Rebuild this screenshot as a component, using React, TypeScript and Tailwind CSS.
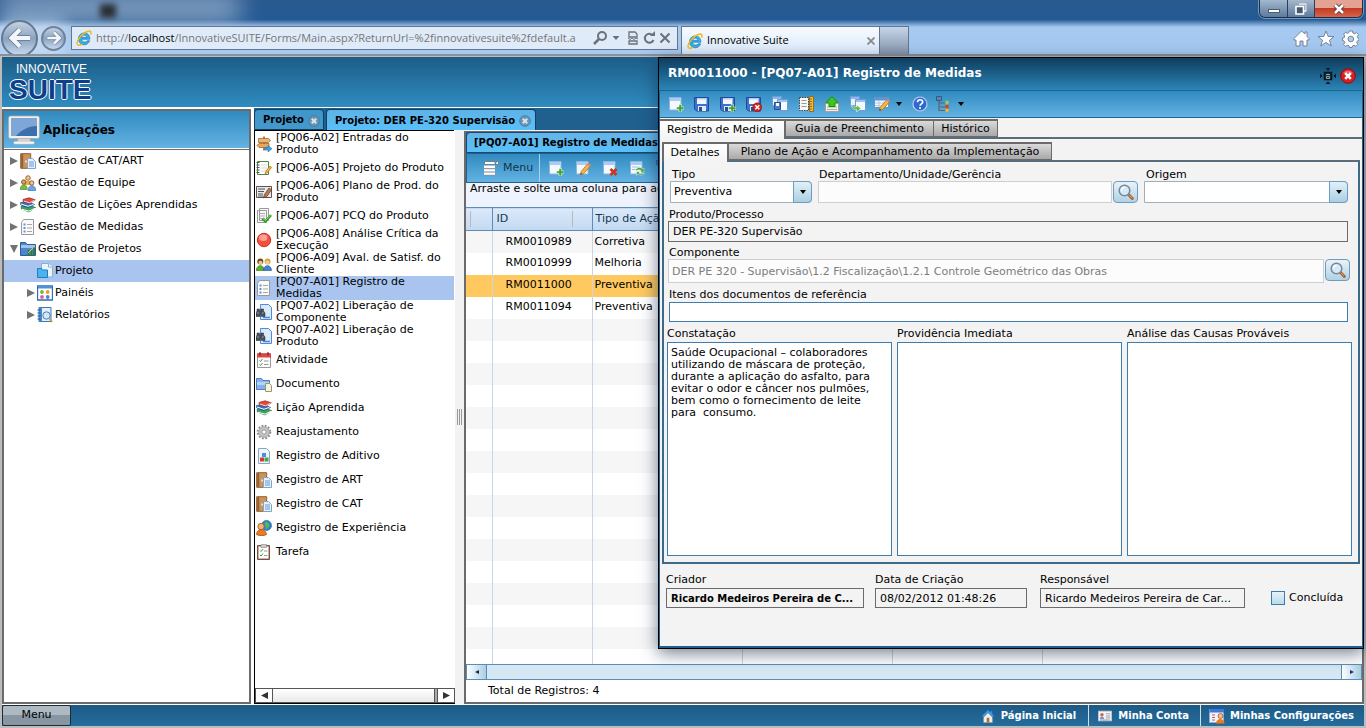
import React from 'react';

type IconProps = { name: string; className?: string };

const page = (
  <>
    <path d="M1.5 1.5h11.500v12.500h-11.500z" fill="#f4f9ff" stroke="#8fb4dd" />
    <path d="M2 2h10.500v3H2z" fill="#a9cdf2" />
  </>
);
const floppy = (
  <>
    <path d="M.5 1.5h14v13.500h-12l-2-2z" fill="#3f72cc" stroke="#1f4a9c" />
    <path d="M3 2h9.500v6H3z" fill="#f3f7fd" />
    <path d="M3 2h9.500v1.500H3z" fill="#b3cef2" />
    <path d="M4 10h8v5H4z" fill="#dfe9f7" />
    <path d="M5 11h3v4H5z" fill="#2b4f8f" />
  </>
);
const plus = <path d="M11 8.500h2.500V11H16v2.500h-2.500V16H11v-2.500H8.500V11H11z" fill="#3fa535" stroke="#fff" strokeWidth=".5" />;
const book = (
  <>
    <path d="M.7.7h10v14.600h-10z" fill="#cf9358" stroke="#93602e" />
    <path d="M1.200 1.200h2v13.600h-2z" fill="#8f5f35" />
    <path d="M5 7.500h3v2H5z" fill="#f6dcb6" />
    <path d="M7.500 5.500h5l3 3v7h-8z" fill="#e6f1fc" stroke="#7ba5d2" />
    <path d="M9 9h5M9 11h5M9 13h5" stroke="#6d98c8" />
  </>
);
const books = (
  <>
    <path d="M1 9.500 8 8l7.500 2.500L9 15 1.500 12z" fill="#3ea158" stroke="#1f6f38" strokeWidth=".7" />
    <path d="M2 12.200 9 14.200l6-3" stroke="#fff" fill="none" />
    <path d="M.6 5.500 8 4.500l6.500 3L8 10.500.8 8z" fill="#2f6fc2" stroke="#1a4789" strokeWidth=".7" />
    <path d="m1 7 7 2.300 5.500-2" stroke="#fff" fill="none" />
    <path d="M3 2.500 9 .8l6.300 2L9.500 6.500 3.300 4.500z" fill="#e5493c" stroke="#9c1f18" strokeWidth=".7" />
    <path d="m4 4.200 5.500 1.600 5-2.600" stroke="#fff" fill="none" strokeWidth=".8" />
  </>
);
const checklist = (
  <>
    <path d="m3.500.5-2 3v12h12V.5z" fill="#fafafa" stroke="#9a9a9a" />
    <path d="M3.500 4.500h2v2h-2zM3.500 8h2v2h-2zM3.500 11.500h2v2h-2z" fill="#5f93d6" />
    <path d="M7 5.500h5M7 9h5M7 12.500h5" stroke="#a7a7a7" />
  </>
);
const binocular = (
  <>
    <path d="M4.500.5h8l3 3v12h-11z" fill="#dbeafb" stroke="#4f8ad8" />
    <path d="M7 13.500h7" stroke="#4f8ad8" strokeWidth="1.500" />
    <path d="M1 5h2.500v2h1.500V5h2.500v2L9 9v3.500H5.300V10H4v2.500H0V9l1-2z" fill="#4a5058" stroke="#22262b" strokeWidth=".5" />
    <path d="M1.200 9h1.600M6 9h1.600" stroke="#a9b0b8" />
  </>
);
const search = (
  <>
    <path d="m10.500 10.500 3.800 4" stroke="#a86a32" strokeWidth="3" strokeLinecap="round" />
    <path d="m10.500 10.500 3 3" stroke="#d59a5d" strokeLinecap="round" />
    <circle cx="6.500" cy="6.500" r="5.300" fill="#d5e9fc" stroke="#7b8796" strokeWidth="1.500" />
    <path d="M3.500 6.500a3 3 0 0 1 3-3" stroke="#fff" fill="none" strokeWidth="1.300" />
  </>
);
const pencil = (
  <>
    <path d="m5.500 14.500.8-3.200L12.500 4l2.700 2.200-6.400 7.300z" fill="#f1b548" stroke="#b3731c" strokeWidth=".8" />
    <path d="m12.500 4 1-1.200 2.500 2-.9 1.400z" fill="#e08585" />
    <path d="m5.300 14.700.5-1.800 1.400 1.200z" fill="#333" />
  </>
);
const ie = (
  <>
    <path d="M13.800 9.200H5.600c.2 3.200 4.300 3.800 5.700 1.500h2.300c-.9 2.800-3 4.100-5.300 4.100-3.400 0-5.800-2.600-5.800-6s2.500-5.900 5.800-5.900c3.500 0 5.700 2.500 5.500 6.300zM5.700 7.400h5c-.2-3-4.700-3.100-5 0z" fill="#39aee6" stroke="#1778b8" strokeWidth=".7" />
    <path d="M1.600 14.700C-.8 11.600 6.200 2.700 12.200 1.200c2.600-.6 3.300.9 2.400 3.200" fill="none" stroke="#f3b81c" strokeWidth="1.500" />
    <path d="M1.600 14.700c1 1 3.300.2 4.700-.6" fill="none" stroke="#f3b81c" strokeWidth="1.300" />
  </>
);
const tree = (
  <>
    <path d="M3 4v10.500h7M3 7h6M3 11h6" stroke="#5b6672" fill="none" strokeWidth="1.200" />
    <path d="M.5.500h5v4h-5z" fill="#5d83b5" stroke="#36598a" />
    <circle cx="11" cy="6.500" r="1.900" fill="#8ed14f" />
    <circle cx="11" cy="10.700" r="2" fill="#e23a3a" />
    <circle cx="11" cy="14.300" r="1.700" fill="#eac02a" />
  </>
);
const pages = (
  <>
    <path d="M.5.500h9v9h-9z" fill="#e9f2fc" stroke="#6d9bd3" />
    <path d="M1 1h8v2H1z" fill="#8cb7ea" />
    <path d="M5.500 3.500h10v11h-10z" fill="#f6faff" stroke="#6d9bd3" />
    <path d="M6 4h9v2H6z" fill="#9cc3ee" />
  </>
);

const ICONS: Record<string, React.ReactNode> = {
  ie, book, books, checklist, binocular, search, tree,
  monitor: (
    <>
      <path d="M5 12h6l.8 2.500H4.200z" fill="#d8d8d8" stroke="#8b8b8b" strokeWidth=".3" />
      <rect x="2.800" y="13.600" width="10.400" height="1.500" rx=".6" fill="#f4f4f4" stroke="#999" strokeWidth=".2" />
      <rect x=".3" y="1" width="15.400" height="11.300" rx=".9" fill="#f1f1f1" stroke="#a8a8a8" strokeWidth=".4" />
      <rect x="1.500" y="2.200" width="13" height="8.800" fill="#3c6fad" />
      <path d="M1.500 2.200h13v3.800C10 6 6 8.500 4 11H1.500z" fill="#7ea6d6" />
    </>
  ),
  people: (
    <>
      <circle cx="8" cy="3" r="2.300" fill="#edc48f" stroke="#8a5a22" strokeWidth=".8" />
      <path d="M4.500 10c0-6 7-6 7 0z" fill="#e4b04a" />
      <circle cx="3.700" cy="7" r="2.200" fill="#d9a066" stroke="#754619" strokeWidth=".8" />
      <path d="M.3 14.500c0-6.500 7-6.500 7 0z" fill="#76bd45" stroke="#3f7e20" strokeWidth=".6" />
      <circle cx="11.700" cy="8" r="2.200" fill="#f1c594" stroke="#754619" strokeWidth=".8" />
      <path d="M8.200 15.500c0-6.500 7.500-6.500 7.500 0z" fill="#6ea4e4" stroke="#2c62ac" strokeWidth=".6" />
    </>
  ),
  projects: (
    <>
      <path d="M.5 1.500h5l1.500 2h8.500v11H.5z" fill="#4d87cb" stroke="#2c5a94" />
      <path d="M1 4h14v3H1z" fill="#9dc3ee" />
      <path d="M8.500 15V9M11.500 15V9.500M14 15V6.500" stroke="#2f7a33" strokeWidth="1.700" />
      <path d="m8 12 5-5" stroke="#f1c431" />
    </>
  ),
  folder: (
    <>
      <path d="M4.500.5h7l4 3.500v10h-11z" fill="#eaf4fd" stroke="#8aaecb" />
      <path d="M11.500.5V4h4" fill="#fff" stroke="#8aaecb" />
      <path d="M.5 5.500h4l1 1.500h5v7.500H.5z" fill="#4cb4ec" stroke="#1d7fc0" />
    </>
  ),
  panels: (
    <>
      <path d="M.5 1h15v14H.5z" fill="#fff" stroke="#2b6cb5" strokeWidth="1.300" />
      <path d="M1 1.500h14v2H1z" fill="#4a91da" />
      <circle cx="5" cy="7" r="1.900" fill="#7db338" />
      <circle cx="10.700" cy="7" r="1.900" fill="#e7a026" />
      <circle cx="5" cy="12" r="1.900" fill="#d85f9f" />
      <circle cx="10.700" cy="12" r="1.900" fill="#4d85dc" />
    </>
  ),
  reports: (
    <>
      <path d="M2 .5h12v14H2z" fill="#e5f0fb" stroke="#3a78bd" />
      <path d="M2 .5h3v14H2z" fill="#4a87cc" />
      <path d="M.5 3h3M.5 6h3M.5 9h3M.5 12h3" stroke="#24588f" />
      <circle cx="9.500" cy="8.500" r="3.700" fill="#cfe8fb" stroke="#4a7fae" />
      <path d="m12.500 12 2.700 3" stroke="#d9952f" strokeWidth="1.800" />
    </>
  ),
  sign: (
    <>
      <path d="M7 .5h2v14H7z" fill="#bd7a3c" />
      <path d="M2.500 2.500h10l2 2-2 2h-10z" fill="#e9b579" stroke="#a9662b" strokeWidth=".8" />
      <path d="M3 7.500h10v4H3l-2-2z" fill="#e3a765" stroke="#a9662b" strokeWidth=".8" />
      <path d="M9 11.500h3V9.500l4 3.300-4 3.200v-2H9z" fill="#36a3e8" stroke="#1b6da8" strokeWidth=".5" />
    </>
  ),
  notebook: (
    <>
      <path d="M1.500 1.500h11v13h-11z" fill="#fff" stroke="#4f8a3a" />
      <path d="M5 5h6M5 8h6M5 11h6" stroke="#d3e0cc" />
      <path d="M.5 2.500h3M.5 5h3M.5 7.500h3M.5 10h3M.5 12.500h3" stroke="#555" />
      <path d="m9 14 1-3 4-5 1.700 1.400-4 5.200z" fill="#f1b03c" stroke="#a8651c" strokeWidth=".6" />
    </>
  ),
  plan: (
    <>
      <path d="M.5 2.500h15v11H.5z" fill="#e9e9e9" stroke="#555" />
      <path d="M2 5h7M2 7.500h6M2 10h5M2 12h5" stroke="#555" strokeWidth="1.200" />
      <path d="m7.500 14 .8-3.200L13 4l2.500 1.700-4.600 6.800z" fill="#b77c56" stroke="#593522" strokeWidth=".7" />
    </>
  ),
  pagecheck: (
    <>
      <path d="M3.500.5h9v12h-9zM1.500 2.500h9v12h-9z" fill="#fafafa" stroke="#999" />
      <path d="M3 5.500h6M3 8h6M3 10.500h6" stroke="#aaa" />
      <path d="m6.500 10.500 3 3 5.500-6.500" stroke="#319b26" strokeWidth="2.500" fill="none" />
      <path d="m7 10.500 2.500 2L14.500 7" stroke="#7fdc6b" fill="none" />
    </>
  ),
  redball: (
    <>
      <circle cx="8" cy="8" r="6.700" fill="#f0503c" stroke="#d2301f" />
      <ellipse cx="7.300" cy="5.800" rx="4.200" ry="3.300" fill="#fba093" />
    </>
  ),
  clients: (
    <>
      <circle cx="4.300" cy="5.500" r="3" fill="#6d4a14" />
      <circle cx="4.500" cy="6.700" r="2" fill="#efc48f" />
      <path d="M.3 14.500c0-6.500 8-6.500 8 0z" fill="#56b02f" stroke="#2d7214" strokeWidth=".6" />
      <circle cx="11.600" cy="5.500" r="3" fill="#d2a73a" />
      <circle cx="11.500" cy="6.500" r="2" fill="#f2cb9d" />
      <path d="M7.500 14.500c0-6.500 8-6.500 8 0z" fill="#4582d3" stroke="#1f5299" strokeWidth=".6" />
    </>
  ),
  calendar: (
    <>
      <path d="M1.500 1.500h13v14h-13z" fill="#fbfbfb" stroke="#999" />
      <path d="M1 1.500h14v4H1z" fill="#e2453f" />
      <path d="M4 .3v3M12 .3v3" stroke="#8e1e1a" strokeWidth="1.500" />
      <path d="m3.500 8.500 1 1 2-2.500M3.500 12.500l1 1 2-2.500" stroke="#3d9b33" fill="none" />
      <path d="M8 9h4.500M8 12.500h4.500" stroke="#999" />
    </>
  ),
  document: (
    <>
      <path d="M.5 2.500h5l1.500 2h6.500v9H.5z" fill="#85b1ec" stroke="#4f7ec2" />
      <path d="M1 6h12v3H1z" fill="#b7d3f7" />
      <path d="M9.500 7.500h4l2 2v6h-6z" fill="#f4f1de" stroke="#9a9673" />
    </>
  ),
  gear: (
    <>
      <circle cx="8" cy="8" r="6.200" fill="none" stroke="#8f8f8f" strokeWidth="2.200" strokeDasharray="1.800 1.446" />
      <circle cx="8" cy="8" r="4" fill="none" stroke="#c2c2c2" strokeWidth="3" />
      <circle cx="8" cy="8" r="5.300" fill="none" stroke="#9a9a9a" strokeWidth=".6" />
      <circle cx="8" cy="8" r="2.200" fill="#fff" stroke="#8b8b8b" />
    </>
  ),
  additive: (
    <>
      <path d="M2.500.5h8l3 3v12h-11z" fill="#eef6fd" stroke="#8aa9bf" />
      <path d="M6 5h4v4H6z" fill="#4d8fd9" />
      <path d="M4 9.500h4v4H4z" fill="#d23a32" />
      <path d="M8.500 9.500h4v4h-4z" fill="#41a84a" />
    </>
  ),
  experience: (
    <>
      <circle cx="10.500" cy="5.500" r="5" fill="#2d86d2" stroke="#165391" strokeWidth=".6" />
      <path d="M9 1.500c3 1 5 2 4 5l-3 3c1-3-2-3-1-8z" fill="#58b845" />
      <circle cx="5" cy="6.500" r="3.200" fill="#f3b277" stroke="#a4531a" strokeWidth=".8" />
      <path d="M.5 14.500c.2-6.500 9.300-6.500 10 0-2 1.500-8 1.500-10 0z" fill="#ef7b1e" stroke="#a84a0c" strokeWidth=".8" />
    </>
  ),
  task: (
    <>
      <path d="M1.500 1.500h12v14h-12z" fill="#9a6c56" stroke="#7b523e" />
      <path d="M2.500 2.500h10v12h-10z" fill="#fff" />
      <path d="M5 .5h5.500v3H5z" fill="#ccc" stroke="#888" strokeWidth=".6" />
      <path d="m4 6.500 1 1 2-2.500M4 11l1 1 2-2.500" stroke="#3d9b33" fill="none" />
      <path d="M8 7h3.500M8 11.500h3.500" stroke="#999" />
    </>
  ),
  list: (
    <>
      <path d="M1.500 1.500h14v3h-14z" fill="#fff" stroke="#6d7f91" />
      <path d="M11 2.500h3l-1.500 1.500z" fill="#333" />
      <path d="M1 5.500h11v10H1z" fill="#fff" />
      <path d="M1 8.700h11M1 12h11M1 15.300h11" stroke="#77889a" />
    </>
  ),
  add: <>{page}{plus}</>,
  edit: <>{page}{pencil}</>,
  remove: <>{page}<path d="m8.500 9 6 6m0-6-6 6" stroke="#c9381e" strokeWidth="2.800" /></>,
  refresh: (
    <>
      {page}
      <path d="M3 7h7M3 9.500h4" stroke="#9ec0e4" />
      <path d="M7 9.500c2-3 5-2.500 6.500-.5l1.500-1v4h-4l1.200-1.200C11 9.500 9 9.500 7 11zM15.500 13c-2 3-5 2.500-6.500.8L7.500 15.500v-3.800h3.500l-1 1.300c1.500 1.200 3.500 1 5.500 0z" fill="#46a83b" stroke="#fff" strokeWidth=".4" />
    </>
  ),
  save: floppy,
  saveAdd: <>{floppy}{plus}</>,
  saveClose: (
    <>
      {floppy}
      <circle cx="11.300" cy="11.300" r="4.500" fill="#d3221d" stroke="#8f0d0a" strokeWidth=".5" />
      <path d="m9.300 9.300 4 4m0-4-4 4" stroke="#fff" strokeWidth="1.600" />
    </>
  ),
  copy: (
    <>
      {pages}
      <path d="M2.500 6.500h6v7h-6z" fill="#4b7dcc" stroke="#244f95" />
      <path d="M4 7h3v3H4z" fill="#fff" />
    </>
  ),
  ruler: (
    <>
      <path d="M1.500 1.500h9v13h-9z" fill="#f8f8f8" stroke="#444" strokeDasharray="1.500 1" />
      <path d="M3.500 4.500h5M3.500 7.500h5M3.500 10.500h5" stroke="#999" />
      <path d="M11.500.5h4v15h-4z" fill="#efb93e" stroke="#9c6d14" />
      <path d="M12 3h2M12 5.500h2M12 8h2M12 10.500h2M12 13h2" stroke="#6e4a07" strokeWidth=".7" />
    </>
  ),
  upload: (
    <>
      <path d="M1.500 6.500h13v9h-13z" fill="#f3f3ee" stroke="#a0a096" />
      <path d="M3 11h10M3 13.500h10" stroke="#aaa" />
      <path d="M8 .5 14.500 7H11v3.500H5V7H1.500z" fill="#3ec421" stroke="#1e8a0b" />
    </>
  ),
  copyArrow: (
    <>
      {pages}
      <path d="M1.500 7c0 3 2 4 5 4V9l4.500 3.500L6.500 16v-2.500C3 13.500.5 11 1.500 7z" fill="#5bb950" stroke="#fff" strokeWidth=".5" />
    </>
  ),
  editTable: (
    <>
      <path d="M.5 1.500h14v10H.5z" fill="#f2f7fd" stroke="#6894c8" />
      <path d="M1 2h13v2.500H1z" fill="#5d93da" />
      <path d="M1 7h12M1 9.500h12M5 4.500v6.500" stroke="#b3cbe8" />
      {pencil}
    </>
  ),
  help: (
    <>
      <circle cx="8" cy="8" r="7" fill="#2e67cf" stroke="#b9d0f2" strokeWidth="1.200" />
      <path d="M5.500 6.300c0-3.500 5.300-3.300 5.200-.2-.1 1.800-2.600 1.800-2.600 3.700" fill="none" stroke="#fff" strokeWidth="1.700" />
      <circle cx="8" cy="12" r="1.100" fill="#fff" />
    </>
  ),
  close: (
    <>
      <circle cx="8" cy="8" r="7.300" fill="#d81e20" stroke="#8c0f10" />
      <path d="M3 5.500c2-4 8-4 10 0z" fill="#f08783" opacity=".7" />
      <path d="m5.200 5.200 5.600 5.600m0-5.600-5.600 5.600" stroke="#fff" strokeWidth="2.600" />
    </>
  ),
  tabClose: (
    <>
      <circle cx="8" cy="8" r="7.200" fill="#6995b3" stroke="#4b7592" />
      <path d="m5 5 6 6m0-6-6 6" stroke="#d3e7f4" strokeWidth="2.600" />
    </>
  ),
  center: (
    <>
      <path d="M4.500 4.500h7v7h-7z" fill="#17303f" stroke="#0a1620" strokeWidth="1.500" />
      <path d="M6 6.500h4M6.500 8.500h3v2h-3z" stroke="#8fb5cb" fill="none" strokeWidth=".9" />
      <path d="M5.500 0h5L8 2.700zM5.500 16h5L8 13.300zM0 5.500v5L2.700 8zM16 5.500v5L13.300 8z" fill="#0d1c28" />
    </>
  ),
  home: (
    <>
      <path d="M3 8v7.500h10V8L8 3z" fill="#f3efe6" stroke="#a79c88" strokeWidth=".6" />
      <path d="M8 .8.8 8l1.700 1.600L8 4.300l5.500 5.300L15.200 8 13 5.800V2h-2v1.800z" fill="#3b9ce8" stroke="#185f9f" strokeWidth=".5" />
      <path d="M6.500 10h3v5.500h-3z" fill="#a96e39" />
    </>
  ),
  account: (
    <>
      <path d="M.5 2.500h15v11H.5z" fill="#f5f5f5" stroke="#ccc" />
      <circle cx="4.500" cy="6.500" r="2" fill="#c76762" />
      <path d="M2 11.500c0-4 5-4 5 0z" fill="#7d91b5" />
      <path d="M9 5.500h5M9 8h5M2.500 12.500h11M9 10.200h5" stroke="#8e98a4" />
    </>
  ),
  settings: (
    <>
      <path d="M.5 1.500h14v13H.5z" fill="#eef4fb" stroke="#8eb0d6" />
      <path d="M.5 1h14.500v3.500H.5z" fill="#3f78e0" />
      <path d="M3 7h3M3 9.500h3M3 12h3" stroke="#d05a5a" />
      <circle cx="11.500" cy="8" r="2.500" fill="#f4bd88" stroke="#a85b22" strokeWidth=".8" />
      <path d="M7 15.500c0-6 8.500-6 8.500 0z" fill="#ee7b1b" />
    </>
  ),
};

function Icon({ name, className = 'size-4' }: IconProps) {
  return (
    <svg viewBox="0 0 16 16" className={`shrink-0 ${className}`} aria-hidden="true">
      {ICONS[name]}
    </svg>
  );
}

function Triangle({ className = '', size = 'size-2' }: { className?: string; size?: string }) {
  return (
    <svg viewBox="0 0 8 8" className={`shrink-0 ${size} ${className}`} aria-hidden="true">
      <path d="M0 0v8l8-4z" fill="currentColor" />
    </svg>
  );
}

function BrowserChrome() {
  return (
    <header className="flex h-14 shrink-0 items-start overflow-hidden border-b-2 border-[#8a9099] bg-linear-to-b from-[#28598f] from-0% via-[#245a94] via-36% to-[#a5c9f0] to-50% font-['Open_Sans',sans-serif] text-xs">
      <div className="relative flex h-14 w-[70px] shrink-0 items-center gap-[3px] pt-5 pl-px">
        <div className="absolute -top-2 left-0 h-8 w-60 bg-[#a3b8d2]/70 blur-md" />
        <div className="absolute top-5 left-0 h-10 w-16 bg-[#cfe0f4]/70 blur-sm" />
        <div className="absolute top-1 left-[100px] h-[14px] w-4 bg-[#2a2f33] blur-[3px]" />
        <button aria-label="Voltar" className="relative grid size-[37px] shrink-0 place-items-center rounded-full border-2 border-[#66788f] bg-linear-to-b from-[#c3d1e3] via-[#8ba3c0] to-[#c7d9ef]">
          <svg viewBox="0 0 24 24" className="size-6" fill="none" strokeWidth="4">
            <path d="M22 12H4M12 3.500 3.500 12l8.500 8.500" stroke="#6f8298" strokeWidth="6" />
            <path d="M22 12H4M12 3.500 3.500 12l8.500 8.500" stroke="#f3f6fa" />
          </svg>
        </button>
        <button aria-label="Avançar" className="relative grid size-[25px] shrink-0 place-items-center rounded-full border-2 border-[#70839b] bg-linear-to-b from-[#c3d1e3] via-[#8ba3c0] to-[#c7d9ef]">
          <svg viewBox="0 0 24 24" className="size-4" fill="none" strokeWidth="4">
            <path d="M2 12h18M12 3.500l8.500 8.500-8.500 8.500" stroke="#6f8298" strokeWidth="6" />
            <path d="M2 12h18M12 3.500l8.500 8.500-8.500 8.500" stroke="#f3f6fa" />
          </svg>
        </button>
      </div>
      <div className="relative mt-[26px] ml-px flex h-6 w-[607px] items-center border border-[#66758c] bg-[#dfebf8] pl-1">
        <Icon name="ie" />
        <div className="ml-1 flex-1 text-[11px] whitespace-nowrap text-[#767676]">
          http://<span className="text-black">localhost</span>/InnovativeSUITE/Forms/Main.aspx?ReturnUrl=%2finnovativesuite%2fdefault.a
        </div>
        <svg viewBox="0 0 84 16" className="ml-1 h-4 w-[84px] shrink-0" fill="none" stroke="#6b7079" strokeWidth="2">
          <circle cx="9" cy="6" r="4" />
          <path d="m6 9-5 5" strokeWidth="2.500" />
          <path d="M19.500 6h7L23 10z" fill="#6b7079" stroke="none" />
          <path d="M36 2h6l2 2v3H36zM36 14v-3h8v3z" strokeWidth="1.300" />
          <path d="m35 8 2 1.500L39 8l2 1.500L43 8l2 1" strokeWidth="1" />
          <path d="M60 5.500A4.500 4.500 0 1 0 60.500 10" />
          <path d="M57 6h5V1z" fill="#6b7079" stroke="none" />
          <path d="m67.500 3.500 9 9m0-9-9 9" />
        </svg>
      </div>
      <div className="mt-[26px] ml-[3px] flex h-7 w-[199px] items-center border border-b-0 border-[#66758c] bg-linear-to-b from-[#f6fbff] to-[#dbe9fb] pr-1">
        <Icon name="ie" className="ml-[5px] size-4" />
        <span className="ml-1 text-[11px]">Innovative Suite</span>
        <svg viewBox="0 0 8 8" className="ml-auto size-2" stroke="#8b8b8b" strokeWidth="1.800"><path d="m.5.500 7 7m0-7-7 7" /></svg>
      </div>
      <div className="mt-[26px] h-7 w-[29px] border border-b-0 border-l-0 border-[#66758c] bg-linear-to-b from-[#c5d6ea] to-[#8494aa]" />
      <div className="ml-auto flex flex-col items-end pr-[3px]">
        <div className="flex h-[18px] overflow-hidden rounded-b-md border border-t-0 border-[#1c2f47] outline outline-[#a9bfd6]/60">
          <button aria-label="Minimizar" className="grid w-7 place-items-center border-r border-[#27405d] bg-linear-to-b from-[#a4b8cd] to-[#5c7b9c]">
            <span className="mt-1 h-1 w-3 border border-[#4b5e74] bg-white" />
          </button>
          <button aria-label="Restaurar" className="grid w-[27px] place-items-center border-r border-[#27405d] bg-linear-to-b from-[#a4b8cd] to-[#5c7b9c]">
            <svg viewBox="0 0 12 12" className="size-3" fill="none"><path d="M4 1h7v7H9" stroke="#47596e" strokeWidth="2.200" /><path d="M4 1h7v7H9" stroke="#fff" strokeWidth="1.300" /><path d="M1 3.500h7.500V11H1z" fill="#47596e" stroke="#fff" strokeWidth="1.600" /></svg>
          </button>
          <button aria-label="Fechar" className="grid w-[47px] place-items-center bg-linear-to-b from-[#e3a292] from-45% via-[#c23c22] via-50% to-[#d8644a]">
            <svg viewBox="0 0 12 12" className="size-3" fill="none"><path d="m2 2 8 8m0-8-8 8" stroke="#5c3a3a" strokeWidth="4.500" /><path d="m2 2 8 8m0-8-8 8" stroke="#fff" strokeWidth="2.500" /></svg>
          </button>
        </div>
        <svg viewBox="0 0 66 18" className="mt-3 mr-1 h-[18px] w-[66px]" fill="#fff" stroke="#73849b">
          <path d="M8.500 1 1 8.500V10h2v6h4v-5h3v5h4v-6h2V8.500l-2-2V2h-2v2z" />
          <path d="m33 1 2.200 5.500h5.800l-4.500 3.800L38.200 16 33 12.500 27.800 16l1.700-5.700L25 6.500h5.800z" />
          <path d="M56.500 1h3l.4 2 1.800.8 1.800-1.200 2 2-1.200 1.800.7 1.800 1 .3v2l-1.500.4-.8 1.700 1.200 1.800-2 2-1.800-1.200-1.600.7-.5 1.600h-2.500l-.5-1.600-1.600-.7-1.800 1.200-2-2 1.200-1.800-.8-1.700-1.500-.4V8l1.600-.3.700-1.800-1.200-1.700 2-2 1.800 1.200 1.300-.7z" />
          <circle cx="57.800" cy="9" r="2.800" fill="#b4cdec" />
        </svg>
      </div>
    </header>
  );
}

type TreeItem = { label: string; icon: string; level: number; state: 'closed' | 'open' | 'leaf' };
const TREE: TreeItem[] = [
  { label: 'Gestão de CAT/ART', icon: 'book', level: 0, state: 'closed' },
  { label: 'Gestão de Equipe', icon: 'people', level: 0, state: 'closed' },
  { label: 'Gestão de Lições Aprendidas', icon: 'books', level: 0, state: 'closed' },
  { label: 'Gestão de Medidas', icon: 'checklist', level: 0, state: 'closed' },
  { label: 'Gestão de Projetos', icon: 'projects', level: 0, state: 'open' },
  { label: 'Projeto', icon: 'folder', level: 1, state: 'leaf' },
  { label: 'Painéis', icon: 'panels', level: 1, state: 'closed' },
  { label: 'Relatórios', icon: 'reports', level: 1, state: 'closed' },
];

function AppsPanel() {
  return (
    <aside className="mt-px flex w-[249px] shrink-0 flex-col border-2 border-[#6b6b6b] bg-white">
      <h2 className="flex h-[38px] shrink-0 items-center gap-[3px] border-b border-white bg-linear-to-b from-[#2f8abf] to-[#63b3e3] pl-1 text-xs font-bold">
        <Icon name="monitor" className="size-8" />
        Aplicações
      </h2>
      <ul className="border-t border-[#6b6b6b]">
        {TREE.map((item) => (
          <li
            key={item.label}
            className={`flex h-[22px] items-center ${item.level ? 'pl-[23px]' : 'pl-1.5'} ${item.label === 'Projeto' ? 'bg-[#a9c5ef]' : ''}`}
          >
            <Triangle className={`text-[#6d7472] ${item.state === 'leaf' ? 'invisible' : ''} ${item.state === 'open' ? 'rotate-90' : ''}`} />
            <Icon name={item.icon} className="ml-0.5 size-4" />
            <a href="#" className="ml-0.5">{item.label}</a>
          </li>
        ))}
      </ul>
    </aside>
  );
}

const MENU: { label: string; icon: string }[] = [
  { label: '[PQ06-A02] Entradas do\nProduto', icon: 'sign' },
  { label: '[PQ06-A05] Projeto do Produto', icon: 'notebook' },
  { label: '[PQ06-A06] Plano de Prod. do\nProduto', icon: 'plan' },
  { label: '[PQ06-A07] PCQ do Produto', icon: 'pagecheck' },
  { label: '[PQ06-A08] Análise Crítica da\nExecução', icon: 'redball' },
  { label: '[PQ06-A09] Aval. de Satisf. do\nCliente', icon: 'clients' },
  { label: '[PQ07-A01] Registro de\nMedidas', icon: 'checklist' },
  { label: '[PQ07-A02] Liberação de\nComponente', icon: 'binocular' },
  { label: '[PQ07-A02] Liberação de\nProduto', icon: 'binocular' },
  { label: 'Atividade', icon: 'calendar' },
  { label: 'Documento', icon: 'document' },
  { label: 'Lição Aprendida', icon: 'books' },
  { label: 'Reajustamento', icon: 'gear' },
  { label: 'Registro de Aditivo', icon: 'additive' },
  { label: 'Registro de ART', icon: 'book' },
  { label: 'Registro de CAT', icon: 'book' },
  { label: 'Registro de Experiência', icon: 'experience' },
  { label: 'Tarefa', icon: 'task' },
];

function ProjectMenu() {
  return (
    <nav className="flex w-[201px] shrink-0 flex-col border-b border-l border-black bg-white">
      <ul className="mr-px min-h-0 flex-1 overflow-hidden border-t border-black pt-px">
        {MENU.map((item, i) => (
          <li key={i} className={`flex h-6 items-center gap-1 pl-px ${i === 6 ? 'bg-[#a9c5ef]' : ''}`}>
            <Icon name={item.icon} />
            <a href="#" className="leading-3 whitespace-pre">{item.label}</a>
          </li>
        ))}
      </ul>
      <div className="flex h-[15px] shrink-0 border border-[#555] bg-[#f5f5f5]">
        <button aria-label="Rolar para a esquerda" className="grid w-4 place-items-center bg-white"><Triangle size="size-[7px]" className="rotate-180 text-[#333]" /></button>
        <div className="flex-1 border-x border-[#555] bg-linear-to-b from-white to-[#e9e9e9]" />
        <div className="w-[3px] border-r border-[#555] bg-[#aaa]" />
        <button aria-label="Rolar para a direita" className="grid w-4 place-items-center bg-white"><Triangle size="size-[7px]" className="text-[#333]" /></button>
      </div>
    </nav>
  );
}

const RECORDS = [
  ['RM0010989', 'Corretiva'],
  ['RM0010999', 'Melhoria'],
  ['RM0011000', 'Preventiva'],
  ['RM0011094', 'Preventiva'],
];
const ROWS = [...RECORDS, ...Array.from({ length: 16 }, () => ['', ''])];

function RecordGrid() {
  return (
    <section className="flex min-w-0 flex-1 flex-col border-2 border-t border-[#6b6b6b] bg-white">
      <div className="flex h-[21px] shrink-0 bg-[#20608f]">
        <h2 className="flex w-56 items-center rounded-t border border-[#174a6e] bg-linear-to-b from-[#63b5e8] to-[#58c0fa] pl-[7px] text-[10px] font-bold whitespace-nowrap">
          [PQ07-A01] Registro de Medidas
        </h2>
      </div>
      <div className="flex h-[30px] shrink-0 items-center border border-[#20608f] bg-linear-to-b from-[#2f8abf] to-[#63b3e3] pl-4">
        <button className="flex h-full items-center gap-1 border-r border-[#a8d2ec] pr-1.5 text-[#12344a]">
          <Icon name="list" />
          Menu
        </button>
        <div className="ml-2 flex gap-[11px]">
          <button aria-label="Novo"><Icon name="add" /></button>
          <button aria-label="Editar"><Icon name="edit" /></button>
          <button aria-label="Excluir"><Icon name="remove" /></button>
          <button aria-label="Atualizar"><Icon name="refresh" /></button>
          <button aria-label="Hierarquia"><Icon name="tree" /></button>
        </div>
      </div>
      <p className="h-6 shrink-0 bg-[#eef3fd] pl-1 leading-3 whitespace-nowrap">
        Arraste e solte uma coluna para agrupar por ela
      </p>
      <div className="min-h-0 flex-1 overflow-hidden">
        <table className="w-full table-fixed border-collapse text-left">
          <colgroup>
            <col className="w-[26px]" />
            <col className="w-[100px]" />
            <col className="w-[150px]" />
            <col className="w-[150px]" />
            <col className="w-[150px]" />
            <col />
          </colgroup>
          <thead>
            <tr className="h-[23px] border-y border-[#5c8db8] bg-linear-to-b from-[#dbe9fa] to-[#c3d9f1] text-[#123a4f]">
              <th className="border-r border-[#5c8db8] p-0"><span className="ml-1 block h-4 w-px bg-[#b9b9b9]" /></th>
              <th className="border-r border-[#5c8db8] p-0 pl-1 font-normal">
                <span className="flex h-4 w-[76px] items-center border-r border-[#b9b9b9]">ID</span>
              </th>
              <th className="border-r border-[#5c8db8] p-0 pl-[3px] font-normal">Tipo de Ação</th>
              <th className="border-r border-[#5c8db8]" />
              <th className="border-r border-[#5c8db8]" />
              <th />
            </tr>
          </thead>
          <tbody>
            {ROWS.map((row, i) => (
              <tr key={i} className={`h-[22px] ${i === 2 ? 'bg-[#ffc95f]' : i % 2 === 0 ? 'bg-[#f6f6f6]' : 'bg-white'}`}>
                <td className="border-r border-[#c9d5e4] p-0" />
                <td className="border-r border-[#c9d5e4] p-0 pl-[13px]">{row[0]}</td>
                <td className="border-r border-[#c9d5e4] p-0 pl-0.5">{row[1]}</td>
                <td className="border-r border-[#c9d5e4] p-0" />
                <td className="border-r border-[#c9d5e4] p-0" />
                <td className="p-0" />
              </tr>
            ))}
          </tbody>
        </table>
      </div>
      <div className="flex h-4 shrink-0 justify-between border border-[#5c8db8] bg-[#d6e8f4]">
        <button aria-label="Rolar para a esquerda" className="grid w-5 place-items-center border-r border-[#5c8db8] bg-linear-to-r from-white to-[#a9cfe2]"><Triangle size="h-1.5 w-1" className="rotate-180 text-[#1c2b55]" /></button>
        <button aria-label="Rolar para a direita" className="grid w-5 place-items-center border-l border-[#5c8db8] bg-linear-to-r from-white to-[#a9cfe2]"><Triangle size="h-1.5 w-1" className="text-[#1c2b85]" /></button>
      </div>
      <p className="flex h-[22px] shrink-0 items-center pl-[22px]">Total de Registros: 4</p>
    </section>
  );
}

function Caret() {
  return <svg viewBox="0 0 6 4" className="h-1 w-1.5 shrink-0" aria-hidden="true"><path d="M0 0h6L3 4z" fill="#000" /></svg>;
}

function SelectField({ id, label, value }: { id: string; label: string; value: string }) {
  return (
    <div className="flex flex-col">
      <label htmlFor={id} className="pl-0.5 leading-3">{label}</label>
      <div className="relative">
        <select id={id} defaultValue={value} className="block h-[22px] w-full appearance-none rounded-r border border-[#9fb0bd] bg-white pl-[3px]">
          <option>{value}</option>
        </select>
        <span className="pointer-events-none absolute inset-y-0 right-0 grid w-[19px] place-items-center rounded-r border border-[#6f9bc0] bg-linear-to-b from-[#e2f1f8] to-[#a9cfe2]">
          <Caret />
        </span>
      </div>
    </div>
  );
}

function LookupField({ id, label, value, size }: { id: string; label: string; value: string; size: string }) {
  return (
    <div className="flex flex-col">
      <label htmlFor={id} className="pl-px leading-3">{label}</label>
      <div className="flex items-start gap-px">
        <input id={id} disabled defaultValue={value} className={`min-w-0 flex-1 border border-[#cfcfcf] bg-[#fcfcfc] pl-[3px] text-[#7d7d7d] ${size}`} />
        <button aria-label={`Pesquisar ${label}`} className="grid h-[22px] w-[25px] place-items-center rounded-sm border border-[#6f9bc0] bg-linear-to-b from-[#e9f3f9] to-[#afd2e5]">
          <Icon name="search" />
        </button>
      </div>
    </div>
  );
}

function ReadOnlyField({ id, label, value, className }: { id: string; label: string; value: string; className: string }) {
  return (
    <div className={className}>
      <label htmlFor={id} className="block leading-3">{label}</label>
      <input id={id} readOnly defaultValue={value} className="mt-0.5 block h-5 w-full border border-[#6b6b6b] bg-[#f3f3f3] pl-1" />
    </div>
  );
}

const TOOLBAR: [string, string][] = [
  ['add', 'Novo'],
  ['save', 'Salvar'],
  ['saveAdd', 'Salvar e novo'],
  ['saveClose', 'Salvar e fechar'],
  ['copy', 'Copiar'],
  ['ruler', 'Visualizar'],
  ['upload', 'Enviar'],
  ['copyArrow', 'Duplicar'],
];

const TAB_ON = 'border-2 border-b-0 border-[#6b6b6b] bg-linear-to-b from-white to-[#f3f3f3]';
const TAB_OFF = 'border border-l-0 border-t-2 border-[#6b6b6b] bg-linear-to-b from-[#dadada] to-[#a9a9a9]';

const NOTES: [string, string, string][] = [
  ['constatacao', 'Constatação', 'Saúde Ocupacional – colaboradores utilizando de máscara de proteção, durante a aplicação do asfalto, para evitar o odor e câncer nos pulmões, bem como o fornecimento de leite para  consumo.'],
  ['providencia', 'Providência Imediata', ''],
  ['causas', 'Análise das Causas Prováveis', ''],
];

function RecordDialog() {
  return (
    <section
      role="dialog"
      aria-label="Registro de Medidas"
      className="absolute top-[57px] right-0.5 flex h-[592px] w-[706px] flex-col border border-black bg-[#f3f3f3] shadow-[0_4px_16px_rgba(20,40,70,0.6)]"
    >
      <div className="flex h-8 shrink-0 items-center bg-linear-to-b from-[#0f3e60] to-[#2b85b7] pr-[7px] pl-[9px] text-white">
        <h1 className="flex-1 pb-0.5 text-xs font-bold">RM0011000 - [PQ07-A01] Registro de Medidas</h1>
        <button aria-label="Centralizar"><Icon name="center" className="mt-1 mr-1 block size-4" /></button>
        <button aria-label="Fechar"><Icon name="close" className="mt-1 block size-4" /></button>
      </div>
      <div className="flex h-7 shrink-0 items-center gap-[10px] border border-[#1f6390] bg-linear-to-b from-[#2f8abf] to-[#63b3e3] pb-px pl-2">
        {TOOLBAR.map(([icon, label]) => (
          <button key={icon} aria-label={label}><Icon name={icon} /></button>
        ))}
        <button aria-label="Formulário" className="-ml-0.5 flex items-center gap-1.5"><Icon name="editTable" /><Caret /></button>
        <button aria-label="Ajuda"><Icon name="help" /></button>
        <button aria-label="Hierarquia" className="-ml-0.5 flex items-center gap-1.5"><Icon name="tree" /><Caret /></button>
      </div>
      <div className="flex min-h-0 flex-1 flex-col border-x border-b-2 border-[#20608f] pt-px">
        <div role="tablist" className="flex h-5 shrink-0 items-stretch border-b-2 border-[#5a6d7a]">
          <button role="tab" aria-selected="true" className={`-mb-0.5 w-[126px] border-l-0 pr-1 ${TAB_ON}`}>Registro de Medida</button>
          <button role="tab" aria-selected="false" className={`w-[148px] ${TAB_OFF}`}>Guia de Preenchimento</button>
          <button role="tab" aria-selected="false" className={`w-16 ${TAB_OFF}`}>Histórico</button>
        </div>
        <div className="mx-0.5 mt-[3px] flex flex-col">
          <div role="tablist" className="flex h-5 shrink-0 items-stretch border-b-2 border-[#5a6d7a]">
            <button role="tab" aria-selected="true" className={`-mb-0.5 w-[67px] pr-px ${TAB_ON}`}>Detalhes</button>
            <button role="tab" aria-selected="false" className={`w-[323px] ${TAB_OFF}`}>Plano de Ação e Acompanhamento da Implementação</button>
          </div>
          <form className="flex flex-col border-x-2 border-b-2 border-[#3b6a8a] pt-[7px] pr-1.5 pb-1.5 pl-[3px]">
            <div className="grid grid-cols-[142px_minmax(0,1fr)_204px] gap-x-1.5 pr-1 pl-[3px]">
              <SelectField id="tipo" label="Tipo" value="Preventiva" />
              <LookupField id="departamento" label="Departamento/Unidade/Gerência" value="" size="h-[22px]" />
              <SelectField id="origem" label="Origem" value="" />
            </div>
            <div className="mt-[6px] flex flex-col pr-1 pl-px">
              <label htmlFor="produto" className="pl-px leading-3">Produto/Processo</label>
              <input id="produto" readOnly defaultValue="DER PE-320 Supervisão" className="h-[21px] border border-[#6b6b6b] bg-[#f3f3f3] pl-1" />
            </div>
            <div className="mt-[5px] pr-0.5 pl-px">
              <LookupField id="componente" label="Componente" value="DER PE 320 - Supervisão\1.2 Fiscalização\1.2.1 Controle Geométrico das Obras" size="h-6" />
            </div>
            <div className="mt-1.5 flex flex-col pr-1 pl-0.5">
              <label htmlFor="itens" className="leading-3">Itens dos documentos de referência</label>
              <input id="itens" className="mt-px h-5 border border-[#3f7cab] bg-white pl-1" />
            </div>
            <div className="mt-1.5 grid grid-cols-3 gap-x-[5px]">
              {NOTES.map(([id, label, text]) => (
                <div key={id} className="flex flex-col">
                  <label htmlFor={id} className="leading-3">{label}</label>
                  <textarea id={id} defaultValue={text} className="mt-0.5 h-[214px] resize-none border border-[#3f7cab] bg-white px-[3px] py-1 leading-3" />
                </div>
              ))}
            </div>
          </form>
        </div>
        <div className="flex px-1.5 pt-2.5">
          <ReadOnlyField id="criador" label="Criador" value="Ricardo Medeiros Pereira de C..." className="w-[198px] [&>input]:text-[10px] [&>input]:font-bold" />
          <ReadOnlyField id="data" label="Data de Criação" value="08/02/2012 01:48:26" className="ml-[11px] w-[152px]" />
          <ReadOnlyField id="responsavel" label="Responsável" value="Ricardo Medeiros Pereira de Car..." className="ml-[13px] w-[205px]" />
          <label className="ml-[26px] flex items-center gap-1 pt-3.5">
            <input type="checkbox" className="size-3.5 appearance-none border border-[#3f7cab] bg-linear-to-b from-[#e5f3fa] to-[#b9dcec]" />
            Concluída
          </label>
        </div>
      </div>
    </section>
  );
}

function StatusBar() {
  const link = 'flex items-center border-[#cfe0ec] text-[10px] font-bold text-white';
  return (
    <footer className="flex h-[22px] shrink-0 items-stretch border-t border-white bg-linear-to-b from-[#1d5a86] to-[#256c9c]">
      <button className="w-[69px] rounded-xs border border-[#1f2a33] bg-linear-to-b from-[#aebac3] from-45% to-[#8796a2] to-50%">Menu</button>
      <a href="#" className={`ml-auto gap-1.5 pr-3 ${link}`}><Icon name="home" className="size-3.5" />Página Inicial</a>
      <a href="#" className={`gap-1.5 border-l pr-[11px] pl-[9px] ${link}`}><Icon name="account" className="size-3.5" />Minha Conta</a>
      <a href="#" className={`gap-[5px] border-l pr-2.5 pl-2 ${link}`}><Icon name="settings" />Minhas Configurações</a>
    </footer>
  );
}

export default function App() {
  return (
    <div className="relative flex h-screen flex-col overflow-hidden bg-[#f2f2f2] font-['DejaVu_Sans',sans-serif] text-[11px] text-black">
      <BrowserChrome />
      <div className="flex min-h-0 flex-1 flex-col border-x-2 border-t border-b-2 border-[#bcbcbc]">
        <div className="flex h-[51px] shrink-0 flex-col gap-px border-b border-white bg-linear-to-b from-[#1d5d88] to-[#2f8cc0] pt-1.5 pl-[7px] font-['Liberation_Sans',sans-serif]">
          <span className="pl-[7px] text-xs leading-3 text-white">INNOVATIVE</span>
          <span className="text-[28px] leading-7 font-bold text-[#0d3f8a] [text-shadow:1px_0_#fff,-1px_0_#fff,0_1px_#fff,0_-1px_#fff]">SUITE</span>
        </div>
        <div className="flex min-h-0 flex-1 bg-white">
          <AppsPanel />
          <div className="ml-[3px] flex min-w-0 flex-1 flex-col bg-[#f2f2f2]">
            <div role="tablist" className="flex h-[22px] shrink-0 gap-0.5 bg-[#20608f] pt-px text-[10px] font-bold">
              <button role="tab" aria-selected="false" className="flex w-[70px] items-center gap-1 rounded-t border border-[#123f5e] bg-linear-to-b from-[#3f96c9] to-[#4499cb] pl-2">
                Projeto<Icon name="tabClose" className="mt-0.5 size-3" />
              </button>
              <button role="tab" aria-selected="true" className="flex w-[210px] items-center gap-1 rounded-t border border-b-0 border-[#123f5e] bg-linear-to-b from-[#5fb2e6] to-[#58c0fa] pl-2 whitespace-nowrap">
                Projeto: DER PE-320 Supervisão<Icon name="tabClose" className="mt-0.5 size-3" />
              </button>
            </div>
            <div className="flex min-h-0 flex-1">
              <ProjectMenu />
              <div className="flex w-[9px] shrink-0 items-center justify-center gap-px">
                <span className="h-4 w-px bg-[#999]" />
                <span className="h-4 w-px bg-[#999]" />
                <span className="h-4 w-px bg-[#999]" />
              </div>
              <div className="flex min-w-0 flex-1 pt-px"><RecordGrid /></div>
            </div>
          </div>
        </div>
        <StatusBar />
      </div>
      <RecordDialog />
    </div>
  );
}
